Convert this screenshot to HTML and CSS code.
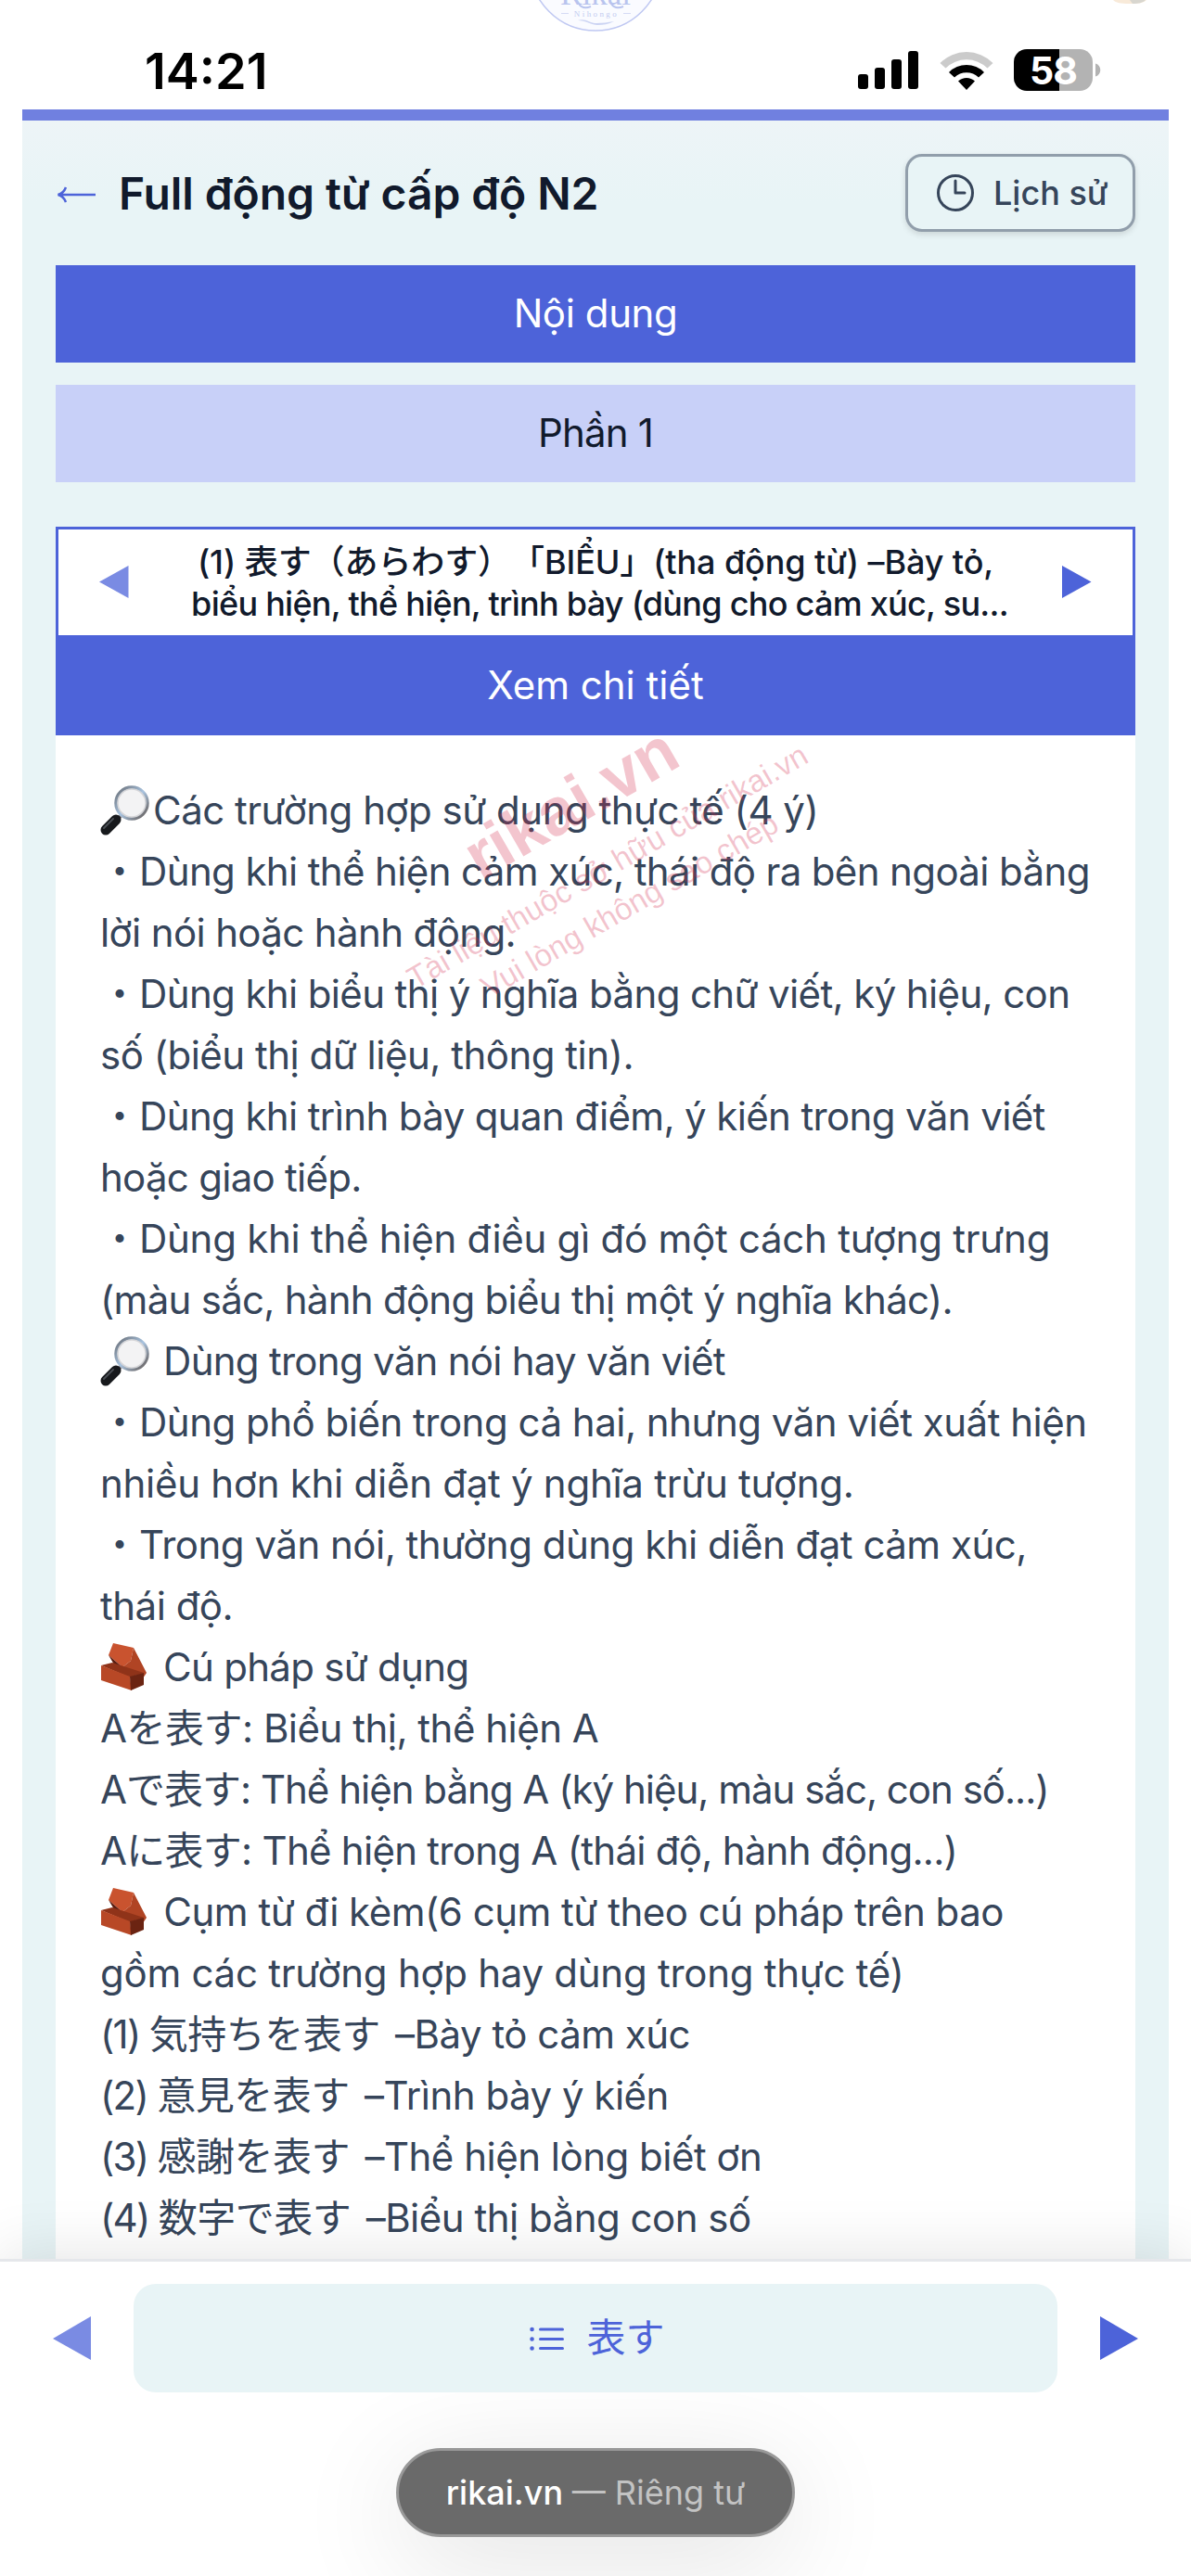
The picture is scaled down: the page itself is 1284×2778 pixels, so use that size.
FILE: index.html
```
<!DOCTYPE html>
<html lang="vi">
<head>
    <meta charset="UTF-8">
    <meta name="viewport" content="width=device-width, initial-scale=1.0">
    <title>Full động từ cấp độ N2</title>
    <link rel="stylesheet" href="styles.css">
</head>
<body>
<header class="status">
    <svg class="logo" width="150" height="36" viewBox="0 0 150 36">
        <circle cx="75" cy="-38" r="71" fill="#fafbff" stroke="#bfc8f2" stroke-width="1.5"/>
        <text x="75" y="5" text-anchor="middle" font-family="Liberation Serif" font-size="35" fill="#b9c4ee">Rikai</text>
        <path d="M57 4c3 5 8 5 13 3M92 4c3 5 8 5 13 3" fill="none" stroke="#b9c4ee" stroke-width="2"/>
        <text x="76" y="18" text-anchor="middle" font-family="Liberation Serif" font-size="9" letter-spacing="2.400" fill="#c3ccf0">Nihongo</text>
        <path d="M38 14.500h8M105 14.500h8" stroke="#d5dbf5"/>
        <path d="M56 22c8-3 13 3 20 3s12-1 19-2c-6 3-12 4-18 4s-13-5-21-5z" fill="#ccd4f3"/>
    </svg>
    <svg class="avatar" width="40" height="5" viewBox="0 0 40 5">
        <path d="M2 0h36c-3 3-8 4-18 4S5 3 2 0z" fill="#f8ead9"/>
        <path d="M20 0h17c-3 3-8 4-14 4z" fill="#d8d6cf"/>
    </svg>
    <div class="clock">14:21</div>
    <div class="status-icons">
        <svg width="66" height="42" viewBox="0 0 66 42">
            <rect x="0" y="25" width="11" height="16" rx="3"/>
            <rect x="18" y="18" width="11" height="23" rx="3"/>
            <rect x="36" y="9" width="11" height="32" rx="3"/>
            <rect x="54" y="0" width="11" height="41" rx="3"/>
        </svg>
        <svg width="58" height="42" viewBox="0 0 58 42">
            <path d="M0.500 13A40 40 0 0 1 57.500 13L51.500 18.500A32 32 0 0 0 6.500 18.500Z" fill="#cbcbcb"/>
            <path d="M10 23A26.500 26.500 0 0 1 48 23L42 28.500A18.500 18.500 0 0 0 16 28.500Z"/>
            <path d="M20 32.500A13 13 0 0 1 38 32.500L29 42Z"/>
        </svg>
        <svg width="95" height="45" viewBox="0 0 95 45">
            <defs>
                <clipPath id="cell"><rect width="85" height="45" rx="14"/></clipPath>
            </defs>
            <g clip-path="url(#cell)">
                <rect width="49" height="45"/>
                <rect x="49" width="36" height="45" fill="#b3b3b3"/>
            </g>
            <path d="M88 15.500c7 2 7 12 0 14z" fill="#b3b3b3"/>
            <text x="42.500" y="37.500" text-anchor="middle" font-family="Inter" font-weight="700" font-size="41" letter-spacing="-1" fill="#fff">58</text>
        </svg>
    </div>
</header>

<main class="page">
    <div class="title-row">
        <span class="back">
            <svg width="42" height="20" viewBox="0 0 42 20" fill="none" stroke="#4d63d9" stroke-width="2.500">
                <path d="M42 10H2M10 2c-1.500 4-4 7-8.500 8 4.500 1 7 4 8.500 8"/>
            </svg>
        </span>
        <h1>Full động từ cấp độ N2</h1>
        <button class="history">
            <svg width="40" height="40" viewBox="0 0 40 40" fill="none" stroke="#36455a" stroke-width="3">
                <circle cx="20" cy="20" r="18.500"/>
                <path d="M20 7v13h10" stroke-linecap="round" stroke-linejoin="round"/>
            </svg>
            Lịch sử
        </button>
    </div>

    <div class="bar">Nội dung</div>
    <div class="bar light">Phần 1</div>

    <div class="picker">
        <svg class="arrow faded" width="32" height="36" viewBox="0 0 32 36"><path d="M31.500 0v35L0 17.500z"/></svg>
        <div class="word">
            <div class="w1">(1) 表す（あらわす）「BIỂU」(tha động từ) –Bày tỏ,</div>
            <div class="w2">biểu hiện, thể hiện, trình bày (dùng cho cảm xúc, su...</div>
        </div>
        <svg class="arrow" width="32" height="36" viewBox="0 0 32 36"><path d="M0 0v35l31.500-17.500z"/></svg>
    </div>
    <div class="bar detail">Xem chi tiết</div>

    <div class="content">
        <div class="watermark">
            <div class="wm-name">rikai.vn</div>
            <div>Tài liệu thuộc sở hữu của rikai.vn</div>
            <div>Vui lòng không sao chép</div>
        </div>
        <p><svg class="emoji"><use href="#glass"/></svg>Các trường hợp sử dụng thực tế (4 ý)</p>
        <p class="tight"><i>・</i>Dùng khi thể hiện cảm xúc, thái độ ra bên ngoài bằng</p>
        <p class="tight">lời nói hoặc hành động.</p>
        <p class="tight"><i>・</i>Dùng khi biểu thị ý nghĩa bằng chữ viết, ký hiệu, con</p>
        <p>số (biểu thị dữ liệu, thông tin).</p>
        <p class="tight"><i>・</i>Dùng khi trình bày quan điểm, ý kiến trong văn viết</p>
        <p class="tighter">hoặc giao tiếp.</p>
        <p class="loose"><i>・</i>Dùng khi thể hiện điều gì đó một cách tượng trưng</p>
        <p class="tighter">(màu sắc, hành động biểu thị một ý nghĩa khác).</p>
        <p class="tighter"><svg class="emoji"><use href="#glass"/></svg> Dùng trong văn nói hay văn viết</p>
        <p><i>・</i>Dùng phổ biến trong cả hai, nhưng văn viết xuất hiện</p>
        <p class="loose">nhiều hơn khi diễn đạt ý nghĩa trừu tượng.</p>
        <p><i>・</i>Trong văn nói, thường dùng khi diễn đạt cảm xúc,</p>
        <p>thái độ.</p>
        <p class="tighter"><svg class="emoji"><use href="#brick"/></svg> Cú pháp sử dụng</p>
        <p>Aを表す: Biểu thị, thể hiện A</p>
        <p class="tightest">Aで表す: Thể hiện bằng A (ký hiệu, màu sắc, con số...)</p>
        <p class="tighter">Aに表す: Thể hiện trong A (thái độ, hành động...)</p>
        <p><svg class="emoji"><use href="#brick"/></svg> Cụm từ đi kèm(6 cụm từ theo cú pháp trên bao</p>
        <p class="loose">gồm các trường hợp hay dùng trong thực tế)</p>
        <p><span class="num">(1) </span><span class="jp">気持ちを表す</span> –Bày tỏ cảm xúc</p>
        <p><span class="num">(2) </span><span class="jp">意見を表す</span> –Trình bày ý kiến</p>
        <p><span class="num">(3) </span><span class="jp">感謝を表す</span> –Thể hiện lòng biết ơn</p>
        <p><span class="num">(4) </span><span class="jp">数字で表す</span> –Biểu thị bằng con số</p>
    </div>
</main>

<footer class="bottom">
    <div class="nav">
        <svg class="arrow faded" width="42" height="48" viewBox="0 0 42 48"><path d="M41 0v47L0 24z"/></svg>
        <button class="current">
            <svg width="37" height="26" viewBox="0 0 37 26" fill="none" stroke="#4d63d9" stroke-width="3" stroke-linecap="round">
                <path d="M11.500 3h24M11.500 13.500h24M11.500 23.500h24"/>
                <path d="M2.500 3h.1M2.500 13.500h.1M2.500 23.500h.1" stroke-width="4.500"/>
            </svg>
            <span>表す</span>
        </button>
        <svg class="arrow" width="42" height="48" viewBox="0 0 42 48"><path d="M1 0v47l41-23z"/></svg>
    </div>
    <div class="url">rikai.vn <span>— Riêng tư</span></div>
</footer>

<!-- shared icons -->
<svg class="defs" width="0" height="0">
    <defs>
        <linearGradient id="rim" x1="0" y1="0" x2="1" y2="1">
            <stop offset="0" stop-color="#666b73"/>
            <stop offset=".5" stop-color="#a9c4e0"/>
            <stop offset="1" stop-color="#5f5550"/>
        </linearGradient>
        <symbol id="glass" viewBox="0 0 54 54">
            <path d="M22 33l-5 5" stroke="#8a7f80" stroke-width="4"/>
            <path d="M17 37L6 48" stroke="#17191c" stroke-width="11" stroke-linecap="round"/>
            <path d="M14 36L4 46" stroke="#4a4e54" stroke-width="2" stroke-linecap="round"/>
            <circle cx="34" cy="19" r="17" fill="#f3f3f4" stroke="url(#rim)" stroke-width="3.500"/>
            <circle cx="34" cy="19" r="15" fill="none" stroke="#d5d5d8" stroke-width="1.500"/>
        </symbol>
        <symbol id="brick" viewBox="0 0 54 54">
            <path d="M14 1l22 5-3 14-9 7L9 14z" fill="#c9532f"/>
            <path d="M36 6l14 27-4 6-22-12 9-7z" fill="#b04424"/>
            <path d="M9 14l15 13 8 4-14-2z" fill="#5a1d10"/>
            <path d="M1 25l12-3 34 11-15 5z" fill="#8f3319"/>
            <path d="M1 25l31 12 2 15L1 41z" fill="#b84826"/>
            <path d="M32 37l15-4v13l-14 6z" fill="#6b2412"/>
        </symbol>
    </defs>
</svg>
</body>
</html>
```
FILE: styles.css
```
* {
    box-sizing: border-box;
}
body {
    margin: 0;
    height: 2778px;
    overflow: hidden;
    position: relative;
    display: flex;
    flex-direction: column;
    background-color: #fff;
    color: #111a2c;
    font-family: Inter, "Noto Sans CJK JP", sans-serif;
    font-size: 42px;
}
button {
    font: inherit;
    letter-spacing: inherit;
}
svg {
    display: block;
    flex: none;
}
.defs {
    position: absolute;
}

/* status bar */
.status {
    height: 118px;
    flex: none;
    position: relative;
    display: flex;
    justify-content: space-between;
    padding: 47px 96px 0 156px;
}
.logo {
    position: absolute;
    left: 567px;
    top: 0;
}
.avatar {
    position: absolute;
    left: 1198px;
    top: 0;
}
.clock {
    font-size: 54px;
    line-height: 60px;
    font-weight: 600;
    color: #000;
    letter-spacing: 0;
}
.status-icons {
    display: flex;
    align-items: center;
    gap: 22px;
    height: 45px;
    margin-top: 6px;
}

/* page */
.page {
    flex: 1;
    min-height: 0;
    overflow: hidden;
    margin: 0 24px;
    padding: 36px 36px 0;
    border-top: 12px solid #7080e0;
    background: linear-gradient(#edf4f7, #e8f4f6 90px);
}
.title-row {
    display: flex;
    align-items: center;
    height: 84px;
    margin-bottom: 36px;
}
.back {
    width: 68px;
    padding: 3px 0 0 1px;
}
h1 {
    flex: 1;
    margin: 0;
    font-size: 48px;
    font-weight: 600;
    letter-spacing: -0.1px;
}
.history {
    display: flex;
    align-items: center;
    gap: 21px;
    width: 248px;
    height: 84px;
    padding: 0 0 0 31px;
    border: 3px solid #919eab;
    border-radius: 18px;
    background-color: #e8f4f6;
    box-shadow: 0 3px 6px rgba(0, 0, 0, 0.12);
    color: #36455a;
    font-size: 36px;
    font-weight: 500;
    white-space: nowrap;
}
.bar {
    height: 105px;
    margin-bottom: 24px;
    background-color: #4d63d9;
    color: #fff;
    line-height: 103px;
    text-align: center;
    letter-spacing: -0.4px;
}
.bar.light {
    margin-bottom: 48px;
    background-color: #c8d0f8;
    color: #111a2c;
    letter-spacing: -0.8px;
}
.bar.detail {
    height: 108px;
    margin-bottom: 0;
    line-height: 107px;
    letter-spacing: 0;
}
.picker {
    display: flex;
    align-items: center;
    justify-content: space-between;
    height: 117px;
    padding: 0 44px;
    border: 3px solid #4d63d9;
    border-bottom: 0;
    background-color: #fff;
}
.arrow {
    fill: #4d63d9;
}
.arrow.faded {
    fill: #7a8be3;
}
.word {
    padding-top: 2px;
    font-size: 36px;
    line-height: 45px;
    font-weight: 500;
    text-align: center;
    white-space: nowrap;
}
.w1 {
    letter-spacing: -0.1px;
    text-spacing-trim: space-all;
}
.w2 {
    padding-left: 9px;
    letter-spacing: -0.73px;
}

/* lesson text */
.content {
    position: relative;
    height: 2000px;
    overflow: hidden;
    padding: 48px 48px 0;
    background-color: #fff;
    color: #36455a;
}
.content p {
    display: flex;
    align-items: center;
    height: 66px;
    margin: 0;
    line-height: 66px;
    white-space: pre;
    letter-spacing: -0.5px;
}
.content .loose {
    letter-spacing: -0.27px;
}
.content .tight {
    letter-spacing: -0.63px;
}
.content .tighter {
    letter-spacing: -0.73px;
}
.content .tightest {
    letter-spacing: -1px;
}
.content i {
    width: 42px;
    font-style: normal;
    letter-spacing: 0;
}
.content .num {
    letter-spacing: -1.7px;
}
.jp {
    margin-right: 5px;
}
.emoji {
    width: 54px;
    height: 54px;
    margin-right: 3px;
}
.watermark {
    position: absolute;
    left: 329px;
    top: 10px;
    width: 500px;
    transform: rotate(-30deg);
    color: rgba(212, 45, 80, 0.28);
    font-family: "Liberation Sans", sans-serif;
    font-size: 33.3px;
    line-height: 48px;
    text-align: center;
    white-space: nowrap;
}
.wm-name {
    font-size: 72px;
    line-height: 112px;
    font-weight: bold;
}

/* bottom navigation */
.bottom {
    position: relative;
    height: 342px;
    flex: none;
    border-top: 3px solid #e5e7eb;
    background-color: #fff;
    box-shadow: 0 -6px 60px rgba(0, 0, 0, 0.1);
}
.nav {
    display: flex;
    align-items: center;
    justify-content: space-between;
    padding: 24px 57px 0;
}
.current {
    display: flex;
    align-items: center;
    justify-content: center;
    gap: 24px;
    width: 996px;
    height: 117px;
    padding: 0 0 0 4px;
    border: 0;
    border-radius: 24px;
    background-color: #e8f4f6;
    color: #4d63d9;
}
.current span {
    padding-bottom: 8px;
}
.url {
    width: 430px;
    height: 96px;
    margin: 60px auto 0;
    border: 3px solid #999;
    border-radius: 48px;
    background-color: #6a6a6a;
    box-shadow: 0 24px 120px rgba(0, 0, 0, 0.12);
    color: #fff;
    font-size: 36px;
    line-height: 90px;
    font-weight: 500;
    text-align: center;
}
.url span {
    color: #c3c3c3;
    font-weight: 400;
}
```
